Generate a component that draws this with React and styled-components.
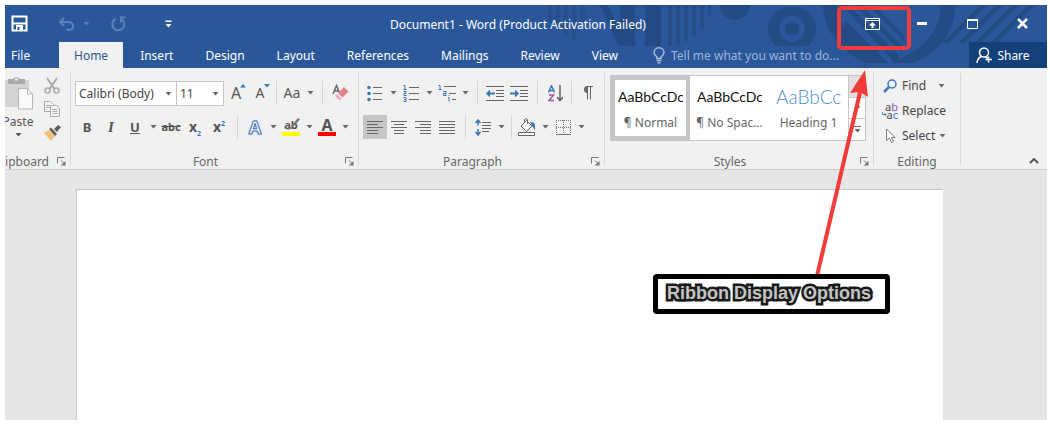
import styled, { createGlobalStyle } from "styled-components";

const GlobalStyle = createGlobalStyle`
    * {
        box-sizing: border-box;
    }
    body {
        margin: 0;
        background: #fff;
        font-family: "Noto Sans", "Open Sans", sans-serif;
        font-size: 12px;
        color: #444;
    }
    button, input {
        font: inherit;
        color: inherit;
    }
`;

const TABS = ["Insert", "Design", "Layout", "References", "Mailings", "Review", "View"];

const STYLES = [
    { name: "¶ Normal", selected: true },
    { name: "¶ No Spac..." },
    { name: "Heading 1", heading: true },
];

const ALIGNMENTS = [
    { label: "Align left", from: 0, to: 11, pressed: true },
    { label: "Center", from: 3, to: 13 },
    { label: "Align right", from: 5, to: 16 },
    { label: "Justify", from: 0, to: 16 },
];

function DownArrow() {
    return (
        <svg width="7" height="4" viewBox="0 0 7 4"><path d="M0.5 0h6L3.5 3.5z" fill="currentColor" /></svg>
    );
}

function Caret({ label, wide }) {
    return (
        <CaretButton aria-label={label} $wide={wide}>
            <DownArrow />
        </CaretButton>
    );
}

function Group({ label, launcher, children }) {
    return (
        <GroupBox>
            <GroupBody>{children}</GroupBody>
            <GroupFooter>
                <GroupLabel>{label}</GroupLabel>
                {launcher && (
                    <Launcher aria-label={`${label} settings`}>
                        <svg width="9" height="9" viewBox="0 0 9 9" fill="none" stroke="#777">
                            <path d="M0.5 6.5v-6h7M4 3.5l3 3" />
                            <path d="M8.5 4v4.5h-5z" fill="#777" stroke="none" />
                        </svg>
                    </Launcher>
                )}
            </GroupFooter>
        </GroupBox>
    );
}

function AlignIcon({ from, to }) {
    return (
        <svg width="16" height="13" viewBox="0 0 16 13" stroke="#666">
            <path d="M0 0.5h16M0 6.5h16" />
            <path d={`M${from} 3.5H${to}M${from} 9.5H${to}M${from} 12.5H${to}`} />
        </svg>
    );
}

function Pattern() {
    return (
        <PatternSvg width="507" height="63" viewBox="540 5 507 63" fill="#244a84">
            <path d="M548 5h4v18h-4zM556 5h4v24h-4zM564 5h4v30h-4zM572 5h4v36h-4zM580 5h5v17h-5z" opacity="0.6" />
            <path d="M600 5h8l12 25v15h-2zM620 5h15v41h-15zM645 5h16v41h-16z" />
            <path d="M668 5h4v41h-4zM676 5h4v40h-4zM684 5h4v36h-4zM692 5h4v31h-4zM700 5h4v24h-4zM708 5h3v12h-3z" opacity="0.8" />
            <path d="M720 5h30a15 15 0 0 1-30 0z" />
            <path fillRule="evenodd" d="M792 7a22 22 0 0 1 16 39h-32a22 22 0 0 1 16-39zM792 16a13 13 0 1 0 0.1 0z" />
            <circle cx="792" cy="29" r="7" />
            <path d="M823 5h14a52 52 0 0 0 13 30l29 16v12h-14Q824 42 823 5z" />
            <path d="M842 5h6l51 50v8h-4zM855 5h6l41 41v7zM868 5h6l30 30v6zM845 20l43 43h-9l-34-34z" />
            <path d="M941 5h14q0 40-42 58h-23q50-18 51-58z" />
            <path d="M980 5h7l-38 38h-7zM996 5h7l-38 38h-7zM1012 5h7l-38 38h-7zM1028 5h7l-38 38h-7z" />
        </PatternSvg>
    );
}

function App() {
    return (
        <Screen>
            <GlobalStyle />
            <Window>
                <Header>
                    <Pattern />
                    <TitleBar>
                        <QuickAccess>
                            <QuickButton aria-label="Save" $width={24}>
                                <svg width="17" height="17" viewBox="0 0 17 17" fill="none" stroke="#fff" strokeWidth="2">
                                    <path d="M1.5 1.5h14v14h-14z" />
                                    <path d="M2 8.5h13" />
                                    <path d="M5 10h7v6H5z" fill="#fff" stroke="none" />
                                    <path d="M6.5 12h2v3h-2z" fill="#2a579a" stroke="none" />
                                </svg>
                            </QuickButton>
                            <HistoryTools>
                                <QuickButton aria-label="Undo" $width={24} $dim>
                                    <svg width="17" height="14" viewBox="0 0 17 14" fill="none" stroke="currentColor" strokeWidth="2">
                                        <path d="M6 1L2 5l4 4M2 5h8.500a4 4 0 0 1 1 8l-3-0.500" />
                                    </svg>
                                </QuickButton>
                                <QuickButton aria-label="Undo history" $width={16} $dim>
                                    <DownArrow />
                                </QuickButton>
                                <QuickButton aria-label="Repeat" $width={48} $dim>
                                    <svg width="15" height="16" viewBox="0 0 15 16" fill="none" stroke="currentColor" strokeWidth="2">
                                        <path d="M4.500 3A6 6 0 1 0 11 3.500M14.500 1.500h-4.500v5" />
                                    </svg>
                                </QuickButton>
                                <QuickButton aria-label="Customize quick access toolbar" $width={52}>
                                    <svg width="7" height="8" viewBox="0 0 7 8" fill="#fff"><path d="M0.500 0.500h6v1.500h-6zM0.500 4h6L3.500 7.500z" /></svg>
                                </QuickButton>
                            </HistoryTools>
                        </QuickAccess>
                        <Title>Document1 - Word (Product Activation Failed)</Title>
                        <WindowButton aria-label="Ribbon Display Options">
                            <svg width="15" height="12" viewBox="0 0 15 12" fill="none" stroke="#fff">
                                <path d="M0.500 0.500h14v11h-14zM1 2.500h13" />
                                <path d="M7.500 4l3.500 3.500H8.500V10h-2V7.500H4z" fill="#fff" stroke="none" />
                            </svg>
                        </WindowButton>
                        <WindowButton aria-label="Minimize">
                            <svg width="10" height="3" viewBox="0 0 10 3"><path d="M0 0h10v3H0z" fill="#fff" /></svg>
                        </WindowButton>
                        <WindowButton aria-label="Maximize">
                            <svg width="11" height="10" viewBox="0 0 11 10" fill="none" stroke="#fff"><path d="M0 1h11" strokeWidth="2" /><path d="M0.500 1.500h10v8h-10z" /></svg>
                        </WindowButton>
                        <WindowButton aria-label="Close">
                            <svg width="11" height="11" viewBox="0 0 11 11" stroke="#fff" strokeWidth="2.500"><path d="M1 1l9 9M10 1l-9 9" /></svg>
                        </WindowButton>
                    </TitleBar>
                    <TabBar>
                        <FileTab>File</FileTab>
                        <Tab $active>Home</Tab>
                        {TABS.map(tab => <Tab key={tab}>{tab}</Tab>)}
                        <TellMe>
                            <svg width="12" height="17" viewBox="0 0 12 17" fill="none" stroke="#aabfdd" strokeWidth="1.500">
                                <path d="M4 11.500V10C2 8.500 1 7.500 1 5.500a5 4.700 0 0 1 10 0C11 7.500 10 8.500 8 10v1.500zM3.500 13.500h5M4.500 15.700h3" />
                            </svg>
                            <TellInput aria-label="Tell me" placeholder="Tell me what you want to do..." />
                        </TellMe>
                        <Share>
                            <svg width="17" height="17" viewBox="0 0 17 17" fill="none" stroke="#fff" strokeWidth="1.500">
                                <circle cx="8" cy="5.500" r="4.500" />
                                <path d="M5.500 9.500Q1.500 11 1 16M9.500 10l2 1M12.500 9.500v6M9.500 12.500h6.500" />
                            </svg>
                            Share
                        </Share>
                    </TabBar>
                </Header>

                <Ribbon>
                    <ClipboardGroup>
                        <Group label="Clipboard" launcher>
                            <ClipboardTools>
                                <PasteButton>
                                    <svg width="31" height="34" viewBox="0 0 31 34">
                                        <path d="M1 4h25v27H1z" fill="#d5d3d8" />
                                        <path d="M5 3h5a4 3.500 0 0 1 7 0h5v5H5z" fill="#aaa8a8" />
                                        <path d="M12 2.500h3v2h-3z" fill="#f0f0f0" />
                                        <path d="M15.500 12.500h9l5 5.500v15h-14z" fill="#fafafa" stroke="#b5b5b5" />
                                        <path d="M24.500 12.500v5.500h5" fill="none" stroke="#b5b5b5" />
                                    </svg>
                                    Paste
                                    <DownArrow />
                                </PasteButton>
                                <ClipboardColumn>
                                    <IconButton aria-label="Cut">
                                        <svg width="16" height="17" viewBox="0 0 16 17" fill="none" stroke="#aaa" strokeWidth="1.500">
                                            <path d="M3 1l7.500 11M13 1l-7.500 11" strokeWidth="2" />
                                            <circle cx="3.500" cy="13.500" r="2.500" /><circle cx="12.500" cy="13.500" r="2.500" />
                                        </svg>
                                    </IconButton>
                                    <IconButton aria-label="Copy">
                                        <svg width="16" height="16" viewBox="0 0 16 16" fill="#f5f5f5" stroke="#aaa">
                                            <path d="M0.500 0.500h6l3 3v7h-9zM2 4.500h4M2 6.500h4" />
                                            <path d="M6.500 4.500h6l3 3v8h-9zM8.500 8.500h5M8.500 10.500h5M8.500 12.500h5" />
                                        </svg>
                                    </IconButton>
                                    <IconButton aria-label="Format Painter">
                                        <svg width="18" height="16" viewBox="0 0 18 16">
                                            <path d="M1 8l5-3 6 6-4 5z" fill="#eec07c" />
                                            <path d="M6 4l2-1.500L14 9l-2 2zM11 4l4-4 3 2-4 5z" fill="#5f5f5f" />
                                        </svg>
                                    </IconButton>
                                </ClipboardColumn>
                            </ClipboardTools>
                        </Group>
                    </ClipboardGroup>

                    <FontGroup>
                        <Group label="Font" launcher>
                            <ToolRow>
                                <Combo $width={102}>
                                    <ComboInput aria-label="Font" defaultValue="Calibri (Body)" />
                                    <Caret label="Font list" wide />
                                </Combo>
                                <Combo $width={48} $joined>
                                    <ComboInput aria-label="Font size" defaultValue="11" />
                                    <Caret label="Font size list" wide />
                                </Combo>
                                <IconButton aria-label="Grow font">
                                    <Glyph $size={16}>A</Glyph>
                                    <Mark>
                                        <svg width="6" height="4" viewBox="0 0 6 4"><path d="M0 3.500h6L3 0z" fill="#3a76b8" /></svg>
                                    </Mark>
                                </IconButton>
                                <IconButton aria-label="Shrink font">
                                    <Glyph $size={14}>A</Glyph>
                                    <Mark>
                                        <svg width="6" height="4" viewBox="0 0 6 4"><path d="M0 0h6L3 3.500z" fill="#3a76b8" /></svg>
                                    </Mark>
                                </IconButton>
                                <Separator $narrow />
                                <IconButton aria-label="Change case"><Glyph $size={14}>Aa</Glyph></IconButton>
                                <Caret label="Case options" />
                                <Separator />
                                <IconButton aria-label="Clear formatting">
                                    <svg width="17" height="18" viewBox="0 0 17 18">
                                        <path d="M1 10L4.500 1.500L7 8M2.500 7h4" fill="none" stroke="#666" strokeWidth="1.500" />
                                        <path d="M6 9l6-6 4.500 4.500-6 6z" fill="#e8808a" />
                                        <path d="M5 10l4.500 4.500-2 2L3 12z" fill="#f2aab0" />
                                    </svg>
                                </IconButton>
                            </ToolRow>
                            <ToolRow>
                                <IconButton aria-label="Bold"><Glyph $size={13} $bold>B</Glyph></IconButton>
                                <IconButton aria-label="Italic"><Glyph $size={15} $bold $italic>I</Glyph></IconButton>
                                <IconButton aria-label="Underline"><Glyph $size={13} $bold $line="underline">U</Glyph></IconButton>
                                <Caret label="Underline options" />
                                <IconButton aria-label="Strikethrough"><Glyph $size={11} $bold $line="line-through">abc</Glyph></IconButton>
                                <IconButton aria-label="Subscript"><Glyph $size={14} $bold>x<sub>2</sub></Glyph></IconButton>
                                <IconButton aria-label="Superscript"><Glyph $size={14} $bold>x<sup>2</sup></Glyph></IconButton>
                                <Separator />
                                <IconButton aria-label="Text effects"><EffectGlyph>A</EffectGlyph></IconButton>
                                <Caret label="Text effect options" />
                                <IconButton aria-label="Text highlight color">
                                    <ColorGlyph $color="#ffff00"><Glyph $size={11} $bold>ab</Glyph></ColorGlyph>
                                    <PenMark>
                                        <svg width="13" height="13" viewBox="0 0 13 13" fill="#777"><path d="M11 0l2 1.500L6 9 4 8zM3.500 8.500l2 1.500-3 1.500H0z" /></svg>
                                    </PenMark>
                                </IconButton>
                                <Caret label="Highlight colors" />
                                <IconButton aria-label="Font color">
                                    <ColorGlyph $color="#ff0000"><Glyph $size={16} $bold>A</Glyph></ColorGlyph>
                                </IconButton>
                                <Caret label="Font colors" />
                            </ToolRow>
                        </Group>
                    </FontGroup>

                    <ParagraphGroup>
                        <Group label="Paragraph" launcher>
                            <ToolRow>
                                <IconButton aria-label="Bullets">
                                    <svg width="16" height="17" viewBox="0 0 16 17">
                                        <path d="M6 2.500h9M6 8.500h9M6 14.500h9" stroke="#666" />
                                        <g fill="#3a76b8"><circle cx="2" cy="2.500" r="1.800" /><circle cx="2" cy="8.500" r="1.800" /><circle cx="2" cy="14.500" r="1.800" /></g>
                                    </svg>
                                </IconButton>
                                <Caret label="Bullet library" />
                                <IconButton aria-label="Numbering">
                                    <svg width="16" height="17" viewBox="0 0 16 17" fill="none">
                                        <path d="M6 2.500h10M6 8.500h10M6 14.500h10" stroke="#666" />
                                        <path d="M0.500 0.500h1.500v4M0.500 4.500h3M0.500 6.500h2.500v2H1v2h2.500M0.500 12.500H3v4H0.500M1 14.500h2" stroke="#3a76b8" />
                                    </svg>
                                </IconButton>
                                <Caret label="Number library" />
                                <IconButton aria-label="Multilevel list">
                                    <svg width="18" height="17" viewBox="0 0 18 17" fill="none">
                                        <path d="M6 1.500h12M11 8.500h7M14 14.500h4" stroke="#666" />
                                        <path d="M0.500 0.500H2v4M0.500 4.500H3.500M5 6.500h3v4H5.500V8.500H8M10 12.500h1v4M10.500 10.500h1" stroke="#3a76b8" />
                                    </svg>
                                </IconButton>
                                <Caret label="List library" />
                                <Separator />
                                <IconButton aria-label="Decrease indent">
                                    <svg width="18" height="15" viewBox="0 0 18 15">
                                        <path d="M0 0.500h18M10 4.500h8M10 7.500h8M10 10.500h8M0 14.500h18" stroke="#666" />
                                        <path d="M0 7.500L4 3.500v3h5v2H4v3z" fill="#3a76b8" />
                                    </svg>
                                </IconButton>
                                <IconButton aria-label="Increase indent">
                                    <svg width="18" height="15" viewBox="0 0 18 15">
                                        <path d="M0 0.500h18M10 4.500h8M10 7.500h8M10 10.500h8M0 14.500h18" stroke="#666" />
                                        <path d="M9 7.500L5 3.500v3H0v2h5v3z" fill="#3a76b8" />
                                    </svg>
                                </IconButton>
                                <Separator />
                                <IconButton aria-label="Sort">
                                    <svg width="15" height="17" viewBox="0 0 15 17" fill="none" strokeWidth="1.500">
                                        <path d="M0.500 7.500L3.500 0.800L6.500 7.500M1.500 5.500h4" stroke="#3a76b8" />
                                        <path d="M1 10h4.500L1 15.500H6" stroke="#9a55b0" />
                                        <path d="M12 0v15M9 12l3 3.500 3-3.500" stroke="#666" />
                                    </svg>
                                </IconButton>
                                <Separator $narrow />
                                <IconButton aria-label="Show marks">
                                    <svg width="11" height="14" viewBox="0 0 11 14">
                                        <path d="M5.500 0.500H11M5.500 0v13.500M8.500 0v13.500" stroke="#666" />
                                        <path d="M5.500 0a3.500 3.500 0 0 0 0 7z" fill="#666" />
                                    </svg>
                                </IconButton>
                            </ToolRow>
                            <ToolRow>
                                {ALIGNMENTS.map(({ label, from, to, pressed }) => (
                                    <IconButton key={label} aria-label={label} $pressed={pressed}>
                                        <AlignIcon from={from} to={to} />
                                    </IconButton>
                                ))}
                                <Separator />
                                <IconButton aria-label="Line spacing">
                                    <svg width="16" height="17" viewBox="0 0 16 17" fill="none">
                                        <path d="M7 3.500h9M7 6.500h9M7 9.500h9M7 12.500h7" stroke="#666" />
                                        <path d="M3 1v5.500M3 10v6M0.500 4L3 1l2.500 3M0.500 13L3 16l2.500-3" stroke="#3a76b8" strokeWidth="1.500" />
                                    </svg>
                                </IconButton>
                                <Caret label="Spacing options" />
                                <Separator $narrow />
                                <IconButton aria-label="Shading">
                                    <svg width="18" height="18" viewBox="0 0 18 18" fill="none" stroke="#666">
                                        <path d="M12 4q5 0 5 3v5q-1-1-2.500-3.500z" fill="#3a76b8" stroke="none" />
                                        <path d="M8.500 2.500l5.500 5.500-5.500 5.500L3 8z" fill="#f8f8f8" />
                                        <path d="M6.500 4.500V1.500q1.500-2 3 0V6" />
                                        <path d="M0.500 14.500h16v3h-16z" fill="#fff" />
                                    </svg>
                                </IconButton>
                                <Caret label="Shading colors" />
                                <IconButton aria-label="Borders">
                                    <svg width="15" height="15" viewBox="0 0 15 15" stroke="#777">
                                        <path d="M0 0.500h15M0.500 0v14M14.500 0v14M7.500 0v14M0 7.500h15" strokeDasharray="1 1" />
                                        <path d="M0 14.500h15" />
                                    </svg>
                                </IconButton>
                                <Caret label="Border options" />
                            </ToolRow>
                        </Group>
                    </ParagraphGroup>

                    <StylesGroup>
                        <Group label="Styles" launcher>
                            <Gallery>
                                {STYLES.map(style => (
                                    <StyleItem key={style.name} $selected={style.selected}>
                                        <Sample $heading={style.heading}>AaBbCcDc</Sample>
                                        <StyleName>{style.name}</StyleName>
                                    </StyleItem>
                                ))}
                                <GalleryScroll>
                                    <ScrollButton aria-label="Previous styles" $disabled />
                                    <ScrollButton aria-label="Next styles">
                                        <DownArrow />
                                    </ScrollButton>
                                    <ScrollButton aria-label="More styles">
                                        <svg width="7" height="7" viewBox="0 0 7 7"><path d="M0 0h7v1H0zM0.500 3h6L3.500 6.500z" fill="currentColor" /></svg>
                                    </ScrollButton>
                                </GalleryScroll>
                            </Gallery>
                        </Group>
                    </StylesGroup>

                    <EditingGroup>
                        <Group label="Editing">
                            <EditButton $spread>
                                <svg width="16" height="14" viewBox="0 0 16 14" fill="none" stroke="#3a76b8">
                                    <circle cx="10" cy="5" r="4" strokeWidth="1.500" /><path d="M7 8l-5 5" strokeWidth="2.500" />
                                </svg>
                                <span>Find</span>
                                <DownArrow />
                            </EditButton>
                            <EditButton>
                                <ReplaceIcon aria-hidden="true">
                                    <ReplaceLine>a<Tint $color="#9a55b0">b</Tint></ReplaceLine>
                                    <ReplaceLine>
                                        <svg width="5" height="5" viewBox="0 0 5 5" fill="none" stroke="#3a76b8"><path d="M0.500 0v2.500h4M3 1l1.500 1.500L3 4" /></svg>
                                        a<Tint $color="#3a76b8">c</Tint>
                                    </ReplaceLine>
                                </ReplaceIcon>
                                <span>Replace</span>
                            </EditButton>
                            <EditButton>
                                <svg width="16" height="16" viewBox="0 0 16 16" fill="#fff" stroke="#777">
                                    <path d="M4.500 1v11.500L7.500 10l2 4.500 2-1L9.500 9.500h3.500z" />
                                </svg>
                                <span>Select</span>
                                <DownArrow />
                            </EditButton>
                        </Group>
                    </EditingGroup>

                    <Collapse aria-label="Collapse the ribbon">
                        <svg width="10" height="6" viewBox="0 0 10 6" fill="none" stroke="#555" strokeWidth="2"><path d="M1 5l4-4 4 4" /></svg>
                    </Collapse>
                </Ribbon>

                <Workspace>
                    <Page />
                </Workspace>

                <Highlight />
                <Arrow width="60" height="215" viewBox="810 65 60 215">
                    <path d="M817 276L861 88" stroke="#f23c3c" strokeWidth="4" />
                    <path d="M865 70L868 97L860 92L850 93z" fill="#f23c3c" />
                </Arrow>
                <Callout>Ribbon Display Options</Callout>
            </Window>
        </Screen>
    );
}

export default App;

const Screen = styled.div`
    display: flex;
    min-height: 100vh;
    padding: 5px 3px 4px 5px;
`;

const Window = styled.main`
    position: relative;
    display: flex;
    flex-direction: column;
    flex: 1;
    min-width: 0;
`;

const Header = styled.header`
    position: relative;
    background: #2a579a;
    color: #fff;
    overflow: hidden;
`;

const PatternSvg = styled.svg`
    position: absolute;
    top: 0;
    right: 0;
`;

const PlainButton = styled.button`
    display: flex;
    align-items: center;
    justify-content: center;
    padding: 0;
    border: none;
    background: transparent;
`;

const TitleBar = styled.div`
    position: relative;
    display: flex;
    height: 37px;
`;

const QuickAccess = styled.div`
    display: flex;
    gap: 23px;
    width: 184px;
    padding-left: 2px;
`;

const HistoryTools = styled.div`
    display: flex;
`;

const QuickButton = styled(PlainButton)`
    flex: none;
    width: ${props => props.$width}px;
    color: ${props => props.$dim ? '#5d82bb' : '#fff'};
`;

const Title = styled.h1`
    flex: 1;
    margin: 0;
    font-size: 12px;
    font-weight: 400;
    line-height: 40px;
    text-align: center;
    white-space: nowrap;
`;

const WindowButton = styled(PlainButton)`
    width: 50px;
`;

const TabBar = styled.nav`
    position: relative;
    display: flex;
    height: 26px;
`;

const Tab = styled(PlainButton)`
    margin-right: 2px;
    padding: 0 15px;
    background: ${props => props.$active ? '#f1f1f1' : 'transparent'};
    color: ${props => props.$active ? '#2a579a' : '#fff'};
`;

const FileTab = styled(PlainButton)`
    width: 54px;
    justify-content: flex-start;
    padding-left: 6px;
`;

const TellMe = styled.label`
    display: flex;
    align-items: center;
    flex: 1;
    gap: 6px;
    padding-left: 18px;
`;

const TellInput = styled.input`
    flex: 1;
    min-width: 0;
    padding: 0;
    border: none;
    outline: none;
    background: transparent;
    &::placeholder {
        color: #9db5d8;
        opacity: 1;
    }
`;

const Share = styled(PlainButton)`
    width: 78px;
    padding-right: 10px;
    gap: 4px;
    background: #14407a;
`;

const Ribbon = styled.section`
    display: flex;
    height: 102px;
    padding-top: 5px;
    background: #f1f1f1;
    border-bottom: 1px solid #d0d0d0;
`;

const GroupBox = styled.div`
    display: flex;
    flex-direction: column;
    height: 100%;
    padding-right: 1px;
    background: linear-gradient(#d8d8d8, #d8d8d8) right top / 1px 92px no-repeat;
`;

const GroupBody = styled.div`
    flex: 1;
    padding: 3px 5px 0;
`;

const GroupFooter = styled.div`
    display: flex;
    align-items: center;
    height: 16px;
`;

const GroupLabel = styled.span`
    flex: 1;
    color: #666;
    text-align: center;
`;

const Launcher = styled(PlainButton)`
    width: 18px;
`;

const ClipboardGroup = styled.div`
    width: 66px;
    ${GroupBody} {
        padding: 0;
    }
    ${GroupLabel} {
        display: flex;
        justify-content: flex-end;
        min-width: 0;
        padding-right: 3px;
        overflow: hidden;
    }
`;

const FontGroup = styled.div`
    width: 288px;
    ${GroupBody} {
        padding-left: 4px;
    }
`;

const ParagraphGroup = styled.div`
    width: 246px;
    ${GroupBody} {
        padding-left: 4px;
    }
`;

const StylesGroup = styled.div`
    width: 269px;
    ${GroupBody} {
        padding-top: 2px;
    }
`;

const EditingGroup = styled.div`
    width: 87px;
    ${GroupBody} {
        padding-top: 0;
    }
`;

const ClipboardTools = styled.div`
    display: flex;
    justify-content: flex-end;
    overflow: hidden;
`;

const PasteButton = styled(PlainButton)`
    flex: none;
    flex-direction: column;
    justify-content: flex-start;
    gap: 3px;
    width: 36px;
    margin-right: 4px;
    padding-top: 3px;
    color: #555;
`;

const ClipboardColumn = styled.div`
    flex: none;
    padding-right: 6px;
`;

const IconButton = styled(PlainButton)`
    position: relative;
    width: 24px;
    height: 24px;
    background: ${props => props.$pressed ? '#c6c6c6' : 'transparent'};
`;

const CaretButton = styled(PlainButton)`
    width: ${props => props.$wide ? 16 : 12}px;
    height: 24px;
    color: #666;
`;

const ToolRow = styled.div`
    display: flex;
    align-items: center;
    height: 34px;
`;

const Separator = styled.span`
    width: ${props => props.$narrow ? 8 : 12}px;
    height: 24px;
    background: linear-gradient(#d4d4d4, #d4d4d4) center / 1px 100% no-repeat;
`;

const Combo = styled.div`
    display: flex;
    width: ${props => props.$width}px;
    height: 25px;
    margin-left: ${props => props.$joined ? -1 : 0}px;
    background: #fff;
    border: 1px solid #c6c6c6;
`;

const ComboInput = styled.input`
    flex: 1;
    min-width: 0;
    padding: 0 0 0 3px;
    border: none;
    outline: none;
    background: transparent;
`;

const Glyph = styled.span`
    color: #555;
    font-size: ${props => props.$size}px;
    font-weight: ${props => props.$bold ? 700 : 400};
    font-style: ${props => props.$italic ? 'italic' : 'normal'};
    font-family: ${props => props.$italic ? '"Liberation Serif", serif' : 'inherit'};
    text-decoration: ${props => props.$line || 'none'};
    line-height: 16px;
    sub, sup {
        color: #3a76b8;
        font-size: 7px;
        line-height: 0;
    }
`;

const Mark = styled.span`
    position: absolute;
    top: 3px;
    right: 2px;
    line-height: 0;
`;

const PenMark = styled.span`
    position: absolute;
    top: 3px;
    right: 3px;
    line-height: 0;
`;

const ColorGlyph = styled.span`
    display: flex;
    align-items: center;
    justify-content: center;
    width: 18px;
    height: 18px;
    border-bottom: 4px solid ${props => props.$color};
`;

const EffectGlyph = styled.span`
    color: #fff;
    font-size: 18px;
    font-weight: 700;
    line-height: 20px;
    -webkit-text-stroke: 1px #3a76b8;
    text-shadow: 0 0 2px #8cb4e2;
`;

const Gallery = styled.div`
    display: flex;
    height: 66px;
    margin-right: 2px;
    background: #fff;
    border: 1px solid #c6c6c6;
`;

const StyleItem = styled.button`
    display: flex;
    flex-direction: column;
    justify-content: center;
    align-items: center;
    gap: 6px;
    width: 79px;
    padding: 0 3px;
    background: #fff;
    border: 4px solid ${props => props.$selected ? '#c6c6c6' : '#fff'};
`;

const Sample = styled.span`
    width: 100%;
    overflow: hidden;
    color: ${props => props.$heading ? '#4a8fd0' : '#111'};
    font-family: Lato, sans-serif;
    font-size: ${props => props.$heading ? 19 : 14}px;
    font-weight: ${props => props.$heading ? 300 : 400};
    line-height: 22px;
    text-align: left;
    white-space: nowrap;
`;

const StyleName = styled.span`
    color: #666;
    white-space: nowrap;
`;

const GalleryScroll = styled.div`
    display: flex;
    flex-direction: column;
    flex: 1;
    border-left: 1px solid #c6c6c6;
`;

const ScrollButton = styled(PlainButton)`
    flex: 1;
    color: #666;
    background: ${props => props.$disabled ? '#e1e1e1' : '#fff'};
    & + & {
        border-top: 1px solid #c6c6c6;
    }
`;

const EditButton = styled(PlainButton)`
    justify-content: flex-start;
    gap: 4px;
    width: 100%;
    height: 25px;
    padding-left: 3px;
    white-space: nowrap;
    > span + svg {
        margin-left: ${props => props.$spread ? 8 : 0}px;
        color: #666;
    }
`;

const ReplaceIcon = styled.span`
    width: 16px;
    font-size: 11px;
`;

const ReplaceLine = styled.span`
    display: flex;
    align-items: center;
    justify-content: flex-end;
    height: 8px;
    line-height: 8px;
`;

const Tint = styled.span`
    color: ${props => props.$color};
`;

const Collapse = styled(PlainButton)`
    align-self: flex-end;
    width: 26px;
    height: 16px;
    margin-left: auto;
`;

const Workspace = styled.section`
    display: flex;
    flex: 1;
    padding: 19px 104px 0 71px;
    background: #e6e6e6;
`;

const Page = styled.article`
    flex: 1;
    background: #fff;
    border: 1px solid #c8c8c8;
    border-width: 1px 0 0 1px;
`;

const Highlight = styled.div`
    position: absolute;
    top: 1px;
    right: 136px;
    width: 74px;
    height: 44px;
    border: 4px solid #f23c3c;
    border-radius: 5px;
`;

const Arrow = styled.svg`
    position: absolute;
    top: 60px;
    right: 177px;
`;

const Callout = styled.div`
    position: absolute;
    top: 269px;
    right: 157px;
    width: 237px;
    height: 40px;
    padding-left: 9px;
    background: #fff;
    border: 5px solid #000;
    border-radius: 4px;
    color: #c4c4c4;
    font-family: "Liberation Sans", sans-serif;
    font-size: 18px;
    font-weight: 700;
    line-height: 28px;
    white-space: nowrap;
    -webkit-text-stroke: 5px #1a1a1a;
    stroke-linejoin: round;
    paint-order: stroke fill;
`;
